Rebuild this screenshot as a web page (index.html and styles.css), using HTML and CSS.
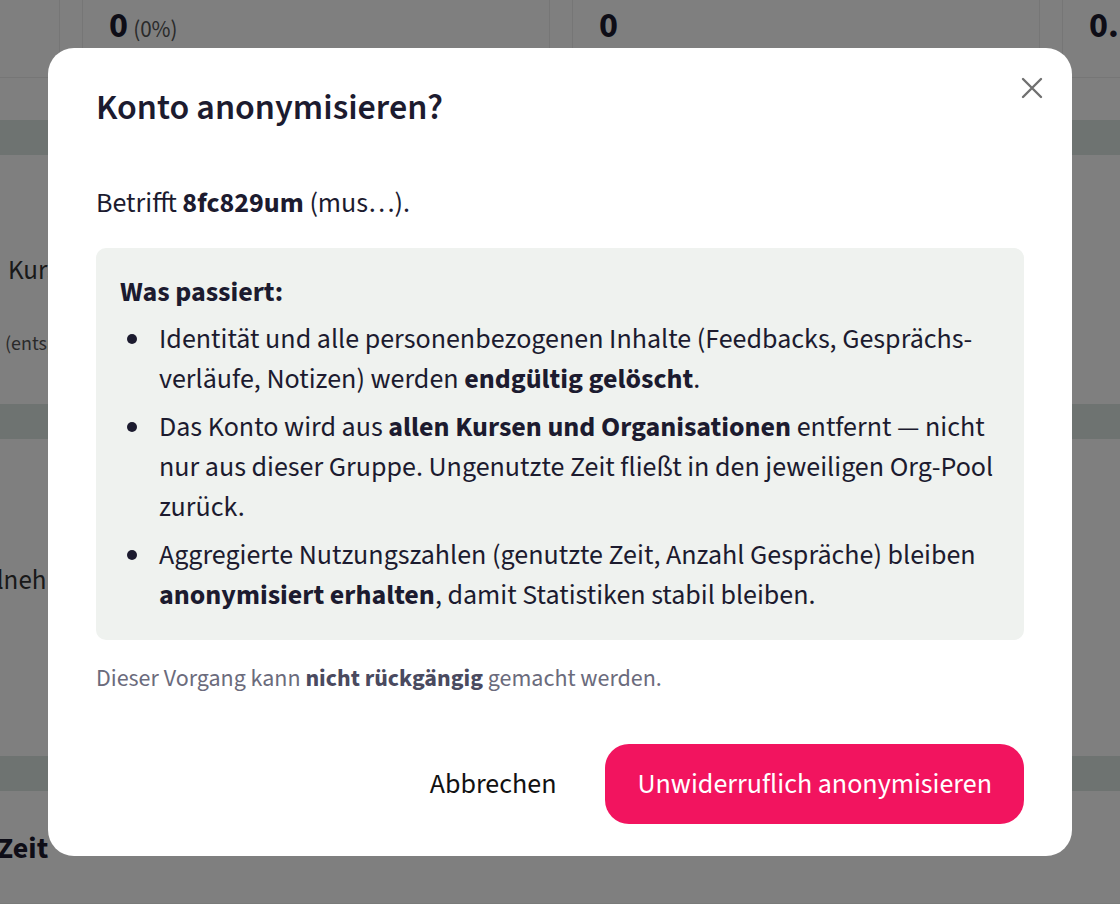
FILE: index.html
```html
<!DOCTYPE html>
<html lang="de">
  <head>
    <meta charset="UTF-8" />
    <meta name="viewport" content="width=device-width, initial-scale=1.0" />
    <title>Konto anonymisieren</title>
    <link rel="stylesheet" href="styles.css">
  </head>
  <body>
    <!-- Seite im Hintergrund -->
    <div class="page">
      <div class="stats">
        <div class="stat stat-edge"></div>
        <div class="stat"><span class="stat-num">0</span> <span class="stat-pct">(0%)</span></div>
        <div class="stat"><span class="stat-num">0</span></div>
        <div class="stat"><span class="stat-num">0.</span></div>
      </div>
      <div class="strip"></div>
      <div class="band"></div>
      <div class="panel panel-courses">
        <div class="panel-label">Kurse</div>
        <div class="panel-sub">(entspricht)</div>
      </div>
      <div class="band"></div>
      <div class="panel panel-members">
        <div class="panel-label panel-label-cut">Teilnehmer</div>
      </div>
      <div class="band"></div>
      <div class="panel panel-time">
        <div class="panel-head">Zeit</div>
      </div>
    </div>

    <div class="overlay">
      <div class="modal" role="dialog" aria-labelledby="modal-title">
        <button class="modal-close" aria-label="Schließen">
          <svg width="22" height="22" viewBox="0 0 22 22">
            <path d="M2 2 L20 20 M20 2 L2 20" stroke="currentColor" stroke-width="2.4" stroke-linecap="round" fill="none" />
          </svg>
        </button>
        <h2 class="modal-title" id="modal-title">Konto anonymisieren?</h2>
        <p class="modal-lead">Betrifft <strong>8fc829um</strong> (mus…).</p>

        <div class="info">
          <p class="info-title">Was passiert:</p>
          <ul class="info-list">
            <li>Identität und alle personenbezogenen Inhalte (Feedbacks, Gesprächs&shy;verläufe, Notizen) werden <strong>endgültig gelöscht</strong>.</li>
            <li>Das Konto wird aus <strong>allen Kursen und Organisationen</strong> entfernt — nicht nur aus dieser Gruppe. Ungenutzte Zeit fließt in den jeweiligen Org-Pool zurück.</li>
            <li>Aggregierte Nutzungszahlen (genutzte Zeit, Anzahl Gespräche) bleiben <strong>anonymisiert erhalten</strong>, damit Statistiken stabil bleiben.</li>
          </ul>
        </div>

        <p class="modal-note">Dieser Vorgang kann <strong>nicht rückgängig</strong> gemacht werden.</p>

        <div class="modal-actions">
          <button class="btn btn-ghost">Abbrechen</button>
          <button class="btn btn-danger">Unwiderruflich anonymisieren</button>
        </div>
      </div>
    </div>
  </body>
</html>
```

FILE: styles.css
```css
* {
  box-sizing: border-box;
}

body {
  margin: 0;
  font-family: "Source Sans 3", "Source Sans Pro", Lato, "Noto Sans", sans-serif;
  color: #1c1b2f;
  background: #f2f4f3;
  overflow: hidden;
}

/* Hintergrundseite */
.page {
  height: 904px;
}

.stats {
  display: flex;
  gap: 22px;
  height: 78px;
  background: #fff;
  border-bottom: 1px solid #ececec;
}

.stat {
  flex: 0 0 468px;
  padding: 3px 26px 0;
  line-height: 46px;
  border-left: 1px solid #ececec;
  border-right: 1px solid #ececec;
}

.stat-edge {
  flex-basis: 60px;
  border-left: 0;
}

.stat-num {
  font-size: 36px;
  font-weight: 700;
}

.stat-pct {
  margin-left: 2px;
  font-size: 23px;
  color: #555;
}

.strip {
  height: 42px;
  background: #fff;
}

.band {
  height: 35px;
  background: #dde6e2;
}

.panel {
  background: #fff;
}

.panel-courses {
  height: 249px;
  padding: 96px 0 0 8px;
}

.panel-label {
  font-size: 27px;
  color: #333;
}

.panel-sub {
  margin-top: 40px;
  margin-left: -3px;
  font-size: 20px;
  color: #555;
}

.panel-members {
  height: 317px;
  padding-top: 122px;
}

.panel-label-cut {
  margin-left: -36px;
}

.panel-time {
  height: 112px;
  padding-top: 36px;
}

.panel-head {
  margin-left: -3px;
  font-size: 30px;
  font-weight: 700;
  color: #1c1b2f;
}

/* Dialog */
.overlay {
  position: fixed;
  inset: 0;
  display: flex;
  align-items: center;
  justify-content: center;
  background: rgba(0, 0, 0, 0.5);
}

.modal {
  position: relative;
  width: 1024px;
  padding: 40px 48px 32px;
  background: #fff;
  border-radius: 26px;
}

.modal-close {
  position: absolute;
  top: 20px;
  right: 20px;
  width: 40px;
  height: 40px;
  display: flex;
  align-items: center;
  justify-content: center;
  padding: 0;
  border: 0;
  background: none;
  color: #707070;
  cursor: pointer;
}

.modal-title {
  margin: 0;
  font-size: 36px;
  line-height: 40px;
  font-weight: 600;
}

.modal-lead {
  margin: 57px 0 27px;
  font-size: 28px;
  line-height: 36px;
}

.modal-lead strong {
  font-weight: 700;
}

.info {
  padding: 24px 24px 25px;
  background: #eff2ef;
  border-radius: 10px;
}

.info-title {
  margin: 0 0 7px;
  font-size: 28px;
  line-height: 40px;
  font-weight: 700;
}

.info-list {
  margin: 0;
  padding-left: 33px;
  font-size: 28px;
  line-height: 40px;
}

.info-list li {
  padding-left: 6px;
}

.info-list li + li {
  margin-top: 8px;
}

.info-list strong {
  font-weight: 700;
}

.modal-note {
  margin: 24px 0 0;
  font-size: 24px;
  line-height: 30px;
  color: #6b6b7c;
}

.modal-note strong {
  color: #4a4a5f;
}

.modal-actions {
  display: flex;
  justify-content: flex-end;
  gap: 17px;
  margin-top: 50px;
}

.btn {
  height: 80px;
  padding: 0 32px;
  border: 0;
  border-radius: 24px;
  font-family: inherit;
  font-size: 28px;
  cursor: pointer;
}

.btn-ghost {
  background: none;
  color: #111;
}

.btn-danger {
  background: #f2145f;
  color: #fff;
  font-weight: 400;
}
```
